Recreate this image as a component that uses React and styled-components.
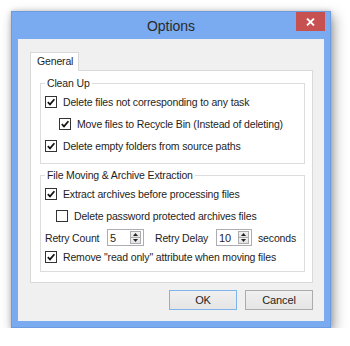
import React from "react";
import styled, { createGlobalStyle } from "styled-components";

const GlobalStyle = createGlobalStyle`
  html, body { margin: 0; padding: 0; background: #fff; }
  body {
    font-family: "Liberation Sans", Arial, sans-serif;
    font-size: 10.5px;
    letter-spacing: -0.15px;
    color: #1e1e1e;
  }
`;

const Stage = styled.div`
  padding: 11px 0 0 11px;
`;

const Window = styled.div`
  width: 320px;
  box-sizing: border-box;
  background: #7aaaf0;
  border: 1px solid #6d9be0;
  padding: 0 6px 6px 6px;
  box-shadow: 3px 5px 12px rgba(0, 0, 0, 0.38), 0 0 5px rgba(0, 0, 0, 0.18);
`;

const TitleBar = styled.div`
  position: relative;
  height: 27px;
  display: flex;
  align-items: center;
  justify-content: center;
`;

const Title = styled.div`
  font-size: 14px;
  letter-spacing: 0;
  color: #2a2a2a;
  padding-top: 1px;
`;

const CloseButton = styled.div`
  position: absolute;
  top: 0;
  right: -1px;
  width: 29px;
  height: 19px;
  background: #c75050;
  display: flex;
  align-items: center;
  justify-content: center;
`;

const Client = styled.div`
  background: #f0f0f0;
  padding: 13px 11px 11px 12px;
`;

const TabStrip = styled.div`
  display: flex;
`;

const Tab = styled.div`
  position: relative;
  z-index: 1;
  width: 49px;
  height: 19px;
  box-sizing: border-box;
  border: 1px solid #d9d9d9;
  border-bottom: none;
  background: #fff;
  padding-left: 6px;
  line-height: 16px;
`;

const Panel = styled.div`
  margin-top: -1px;
  border: 1px solid #d9d9d9;
  background: #fff;
  padding: 5px 7px 10px 9px;
  display: flex;
  flex-direction: column;
  gap: 4px;
`;

const Group = styled.fieldset`
  margin: 0;
  min-width: 0;
  border: 1px solid #dcdcdc;
  padding: 1px 0 ${(p) => p.$pb}px 4px;
`;

const Legend = styled.legend`
  padding: 0 2px;
  line-height: 14px;
`;

const Row = styled.div`
  display: flex;
  align-items: center;
  height: ${(p) => p.$h || 22}px;
  padding-left: ${(p) => p.$indent || 0}px;
`;

const Box = styled.span`
  width: 12px;
  height: 12px;
  box-sizing: border-box;
  border: 1px solid #333;
  background: #fff;
  margin-right: 6px;
  flex: none;
  display: flex;
  align-items: center;
  justify-content: center;
`;

const Text = styled.span`
  white-space: nowrap;
  width: ${(p) => (p.$w ? `${p.$w}px` : "auto")};
  margin-left: ${(p) => p.$ml || 0}px;
  flex: none;
`;

const Spin = styled.div`
  width: ${(p) => p.$w}px;
  height: 17px;
  box-sizing: border-box;
  border: 1px solid #abadb3;
  background: #fff;
  display: flex;
  align-items: center;
  flex: none;
`;

const SpinValue = styled.span`
  flex: 1;
  padding-left: 2px;
  font-size: 11px;
`;

const SpinButtons = styled.div`
  display: flex;
  flex-direction: column;
  width: 11px;
  height: 13px;
  margin-right: 2px;
`;

const SpinHalf = styled.div`
  flex: 1;
  box-sizing: border-box;
  border: 1px solid #acacac;
  border-top-width: ${(p) => (p.$bottom ? 0 : 1)}px;
  background: linear-gradient(#f2f2f2, #e3e3e3);
  display: flex;
  align-items: center;
  justify-content: center;
`;

const Footer = styled.div`
  display: flex;
  justify-content: flex-end;
  gap: 8px;
  margin-top: 7px;
`;

const Button = styled.div`
  width: 68px;
  height: 20px;
  box-sizing: border-box;
  border: 1px solid ${(p) => (p.$primary ? "#7eb4ea" : "#acacac")};
  background: linear-gradient(#f0f0f0, #e5e5e5);
  display: flex;
  align-items: center;
  justify-content: center;
  font-size: 11px;
`;

const Check = ({ checked }) => (
  <Box>
    {checked && (
      <svg width="10" height="10" viewBox="0 0 10 10">
        <path d="M1.8 5.2 L4 7.4 L8.4 2.2" fill="none" stroke="#111" strokeWidth="1.7" />
      </svg>
    )}
  </Box>
);

const CheckRow = ({ checked, indent, h, children }) => (
  <Row $indent={indent} $h={h}>
    <Check checked={checked} />
    <Text>{children}</Text>
  </Row>
);

const Arrow = ({ up }) => (
  <svg width="5" height="3" viewBox="0 0 5 3">
    <path d={up ? "M0 3 L2.5 0 L5 3 Z" : "M0 0 L2.5 3 L5 0 Z"} fill="#222" />
  </svg>
);

const SpinBox = ({ value, w }) => (
  <Spin $w={w}>
    <SpinValue>{value}</SpinValue>
    <SpinButtons>
      <SpinHalf>
        <Arrow up />
      </SpinHalf>
      <SpinHalf $bottom>
        <Arrow />
      </SpinHalf>
    </SpinButtons>
  </Spin>
);

export default function App() {
  return (
    <>
      <GlobalStyle />
      <Stage>
        <Window>
          <TitleBar>
            <Title>Options</Title>
            <CloseButton>
              <svg width="9" height="8" viewBox="0 0 9 8">
                <path d="M1 0.5 L8 7.5 M8 0.5 L1 7.5" stroke="#fff" strokeWidth="1.8" />
              </svg>
            </CloseButton>
          </TitleBar>
          <Client>
            <TabStrip>
              <Tab>General</Tab>
            </TabStrip>
            <Panel>
              <Group $pb={6}>
                <Legend>Clean Up</Legend>
                <CheckRow checked>Delete files not corresponding to any task</CheckRow>
                <CheckRow checked indent={14}>
                  Move files to Recycle Bin (Instead of deleting)
                </CheckRow>
                <CheckRow checked>Delete empty folders from source paths</CheckRow>
              </Group>
              <Group $pb={5}>
                <Legend>File Moving &amp; Archive Extraction</Legend>
                <CheckRow checked>Extract archives before processing files</CheckRow>
                <CheckRow indent={11}>Delete password protected archives files</CheckRow>
                <Row $h={21}>
                  <Text $w={62}>Retry Count</Text>
                  <SpinBox value="5" w={37} />
                  <Text $ml={11} $w={61}>
                    Retry Delay
                  </Text>
                  <SpinBox value="10" w={36} />
                  <Text $ml={6}>seconds</Text>
                </Row>
                <CheckRow checked h={18}>
                  Remove "read only" attribute when moving files
                </CheckRow>
              </Group>
            </Panel>
            <Footer>
              <Button $primary>OK</Button>
              <Button>Cancel</Button>
            </Footer>
          </Client>
        </Window>
      </Stage>
    </>
  );
}
